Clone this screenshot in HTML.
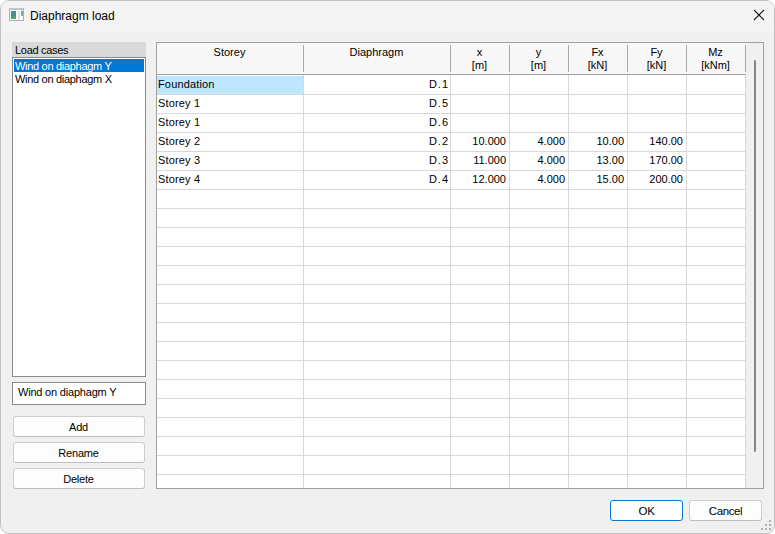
<!DOCTYPE html>
<html><head><meta charset="utf-8">
<style>
*{margin:0;padding:0;box-sizing:border-box}
html,body{width:775px;height:534px;overflow:hidden;background:#ffffff;font-family:"Liberation Sans",sans-serif;}
.a{position:absolute}
.t{position:absolute;white-space:nowrap;color:#000;font-size:11px;line-height:13px}
.btn{position:absolute;background:#fdfdfd;border:1px solid #cdcdcd;border-bottom-color:#bdbdbd;border-radius:3px;text-align:center;font-size:11px;color:#000}
.hl{position:absolute;height:1px;background:#d8d8d8}
.vl{position:absolute;width:1px;background:#d8d8d8}
</style></head><body>

<div class="a" style="left:0;top:0;width:775px;height:534px;border:1px solid #c2c2c2;border-radius:9px;background:#f0f0f0;overflow:hidden">
<div class="a" style="left:0;top:0;width:775px;height:30px;background:#f3f3f3"></div>
</div>
<div class="a" style="left:9px;top:8px;width:15px;height:13px;border:1px solid #aaaeb6;border-top:2px solid #c0c4cc;background:#fbfbfb"></div>
<div class="a" style="left:11px;top:11px;width:5px;height:8px;background:linear-gradient(165deg,#5a82c0,#3f9580 55%,#50b45e)"></div>
<div class="a" style="left:18px;top:11px;width:2px;height:8px;background:#e2e2e2"></div>
<div class="a" style="left:21px;top:11px;width:2px;height:5px;background:linear-gradient(#6a94d0,#7cc870)"></div>
<div class="t" style="left:30px;top:9px;font-size:12px;line-height:14px">Diaphragm load</div>
<svg class="a" style="left:752px;top:8px" width="14" height="14" viewBox="0 0 14 14"><path d="M2 2L12 12M12 2L2 12" stroke="#1a1a1a" stroke-width="1.1"/></svg>
<div class="a" style="left:12px;top:42px;width:134px;height:15px;background:#d9d9d9"></div>
<div class="t" style="left:15px;top:44px;letter-spacing:-0.3px">Load cases</div>
<div class="a" style="left:12px;top:57px;width:134px;height:320px;background:#fff;border:1px solid #8a8a8a"></div>
<div class="a" style="left:14px;top:59px;width:130px;height:13px;background:#0078d7"></div>
<div class="t" style="left:15px;top:60px;color:#fff;letter-spacing:-0.3px">Wind on diaphagm Y</div>
<div class="t" style="left:15px;top:73px;letter-spacing:-0.3px">Wind on diaphagm X</div>
<div class="a" style="left:12px;top:382px;width:134px;height:23px;background:#fff;border:1px solid #8a8a8a"></div>
<div class="t" style="left:18px;top:386px;letter-spacing:-0.2px">Wind on diaphagm Y</div>
<div class="btn" style="left:13px;top:416px;width:132px;height:21px;line-height:21px;padding-right:1px;letter-spacing:-0.2px">Add</div>
<div class="btn" style="left:13px;top:442px;width:132px;height:21px;line-height:21px;padding-right:1px;letter-spacing:-0.2px">Rename</div>
<div class="btn" style="left:13px;top:468px;width:132px;height:21px;line-height:21px;padding-right:1px;letter-spacing:-0.2px">Delete</div>
<div class="a" style="left:156px;top:42px;width:608px;height:447px;background:#fff;border:1px solid #a0a0a0"></div>
<div class="a" style="left:157px;top:43px;width:589px;height:31px;background:#f7f7f7"></div>
<div class="a" style="left:157px;top:74px;width:589px;height:1px;background:#a0a0a0"></div>
<div class="a" style="left:746px;top:43px;width:17px;height:445px;background:#f0f0f0"></div>
<div class="a" style="left:754px;top:60px;width:2px;height:392px;background:#858585;border-radius:1px"></div>
<div class="a" style="left:303px;top:45px;width:1px;height:27px;background:#a8a8a8"></div>
<div class="a" style="left:450px;top:45px;width:1px;height:27px;background:#a8a8a8"></div>
<div class="a" style="left:509px;top:45px;width:1px;height:27px;background:#a8a8a8"></div>
<div class="a" style="left:568px;top:45px;width:1px;height:27px;background:#a8a8a8"></div>
<div class="a" style="left:627px;top:45px;width:1px;height:27px;background:#a8a8a8"></div>
<div class="a" style="left:686px;top:45px;width:1px;height:27px;background:#a8a8a8"></div>
<div class="a" style="left:745px;top:45px;width:1px;height:27px;background:#a8a8a8"></div>
<div class="vl" style="left:303px;top:75px;height:413px"></div>
<div class="vl" style="left:450px;top:75px;height:413px"></div>
<div class="vl" style="left:509px;top:75px;height:413px"></div>
<div class="vl" style="left:568px;top:75px;height:413px"></div>
<div class="vl" style="left:627px;top:75px;height:413px"></div>
<div class="vl" style="left:686px;top:75px;height:413px"></div>
<div class="vl" style="left:745px;top:75px;height:413px"></div>
<div class="hl" style="left:157px;top:94px;width:589px"></div>
<div class="hl" style="left:157px;top:113px;width:589px"></div>
<div class="hl" style="left:157px;top:132px;width:589px"></div>
<div class="hl" style="left:157px;top:151px;width:589px"></div>
<div class="hl" style="left:157px;top:170px;width:589px"></div>
<div class="hl" style="left:157px;top:189px;width:589px"></div>
<div class="hl" style="left:157px;top:208px;width:589px"></div>
<div class="hl" style="left:157px;top:227px;width:589px"></div>
<div class="hl" style="left:157px;top:246px;width:589px"></div>
<div class="hl" style="left:157px;top:265px;width:589px"></div>
<div class="hl" style="left:157px;top:284px;width:589px"></div>
<div class="hl" style="left:157px;top:303px;width:589px"></div>
<div class="hl" style="left:157px;top:322px;width:589px"></div>
<div class="hl" style="left:157px;top:341px;width:589px"></div>
<div class="hl" style="left:157px;top:360px;width:589px"></div>
<div class="hl" style="left:157px;top:379px;width:589px"></div>
<div class="hl" style="left:157px;top:398px;width:589px"></div>
<div class="hl" style="left:157px;top:417px;width:589px"></div>
<div class="hl" style="left:157px;top:436px;width:589px"></div>
<div class="hl" style="left:157px;top:455px;width:589px"></div>
<div class="hl" style="left:157px;top:474px;width:589px"></div>
<div class="a" style="left:157px;top:76px;width:146px;height:18px;background:#bee6ff"></div>
<div class="t" style="left:156px;top:46px;width:147px;text-align:center">Storey</div>
<div class="t" style="left:303px;top:46px;width:147px;text-align:center">Diaphragm</div>
<div class="t" style="left:450px;top:46px;width:59px;text-align:center">x</div>
<div class="t" style="left:450px;top:59px;width:59px;text-align:center">[m]</div>
<div class="t" style="left:509px;top:46px;width:59px;text-align:center">y</div>
<div class="t" style="left:509px;top:59px;width:59px;text-align:center">[m]</div>
<div class="t" style="left:568px;top:46px;width:59px;text-align:center">Fx</div>
<div class="t" style="left:568px;top:59px;width:59px;text-align:center">[kN]</div>
<div class="t" style="left:627px;top:46px;width:59px;text-align:center">Fy</div>
<div class="t" style="left:627px;top:59px;width:59px;text-align:center">[kN]</div>
<div class="t" style="left:686px;top:46px;width:59px;text-align:center">Mz</div>
<div class="t" style="left:686px;top:59px;width:59px;text-align:center">[kNm]</div>
<div class="t" style="left:158px;top:78px;letter-spacing:0.15px">Foundation</div>
<div class="t" style="left:303px;top:78px;width:146px;text-align:right;letter-spacing:1px">D.1</div>
<div class="t" style="left:158px;top:97px;letter-spacing:0.15px">Storey 1</div>
<div class="t" style="left:303px;top:97px;width:146px;text-align:right;letter-spacing:1px">D.5</div>
<div class="t" style="left:158px;top:116px;letter-spacing:0.15px">Storey 1</div>
<div class="t" style="left:303px;top:116px;width:146px;text-align:right;letter-spacing:1px">D.6</div>
<div class="t" style="left:158px;top:135px;letter-spacing:0.15px">Storey 2</div>
<div class="t" style="left:303px;top:135px;width:146px;text-align:right;letter-spacing:1px">D.2</div>
<div class="t" style="left:450px;top:135px;width:56px;text-align:right">10.000</div>
<div class="t" style="left:509px;top:135px;width:56px;text-align:right">4.000</div>
<div class="t" style="left:568px;top:135px;width:56px;text-align:right">10.00</div>
<div class="t" style="left:627px;top:135px;width:56px;text-align:right">140.00</div>
<div class="t" style="left:158px;top:154px;letter-spacing:0.15px">Storey 3</div>
<div class="t" style="left:303px;top:154px;width:146px;text-align:right;letter-spacing:1px">D.3</div>
<div class="t" style="left:450px;top:154px;width:56px;text-align:right">11.000</div>
<div class="t" style="left:509px;top:154px;width:56px;text-align:right">4.000</div>
<div class="t" style="left:568px;top:154px;width:56px;text-align:right">13.00</div>
<div class="t" style="left:627px;top:154px;width:56px;text-align:right">170.00</div>
<div class="t" style="left:158px;top:173px;letter-spacing:0.15px">Storey 4</div>
<div class="t" style="left:303px;top:173px;width:146px;text-align:right;letter-spacing:1px">D.4</div>
<div class="t" style="left:450px;top:173px;width:56px;text-align:right">12.000</div>
<div class="t" style="left:509px;top:173px;width:56px;text-align:right">4.000</div>
<div class="t" style="left:568px;top:173px;width:56px;text-align:right">15.00</div>
<div class="t" style="left:627px;top:173px;width:56px;text-align:right">200.00</div>
<div class="btn" style="left:610px;top:500px;width:73px;height:21px;line-height:21px;border-color:#0a74d0;font-size:11.5px;letter-spacing:-0.2px">OK</div>
<div class="btn" style="left:689px;top:500px;width:73px;height:21px;line-height:21px;font-size:11.5px;letter-spacing:-0.4px">Cancel</div>
<div class="a" style="left:769px;top:520px;width:2px;height:2px;background:#b0b0b0"></div>
<div class="a" style="left:765px;top:524px;width:2px;height:2px;background:#b0b0b0"></div>
<div class="a" style="left:769px;top:524px;width:2px;height:2px;background:#b0b0b0"></div>
<div class="a" style="left:761px;top:528px;width:2px;height:2px;background:#b0b0b0"></div>
<div class="a" style="left:765px;top:528px;width:2px;height:2px;background:#b0b0b0"></div>
<div class="a" style="left:769px;top:528px;width:2px;height:2px;background:#b0b0b0"></div>
</body></html>
